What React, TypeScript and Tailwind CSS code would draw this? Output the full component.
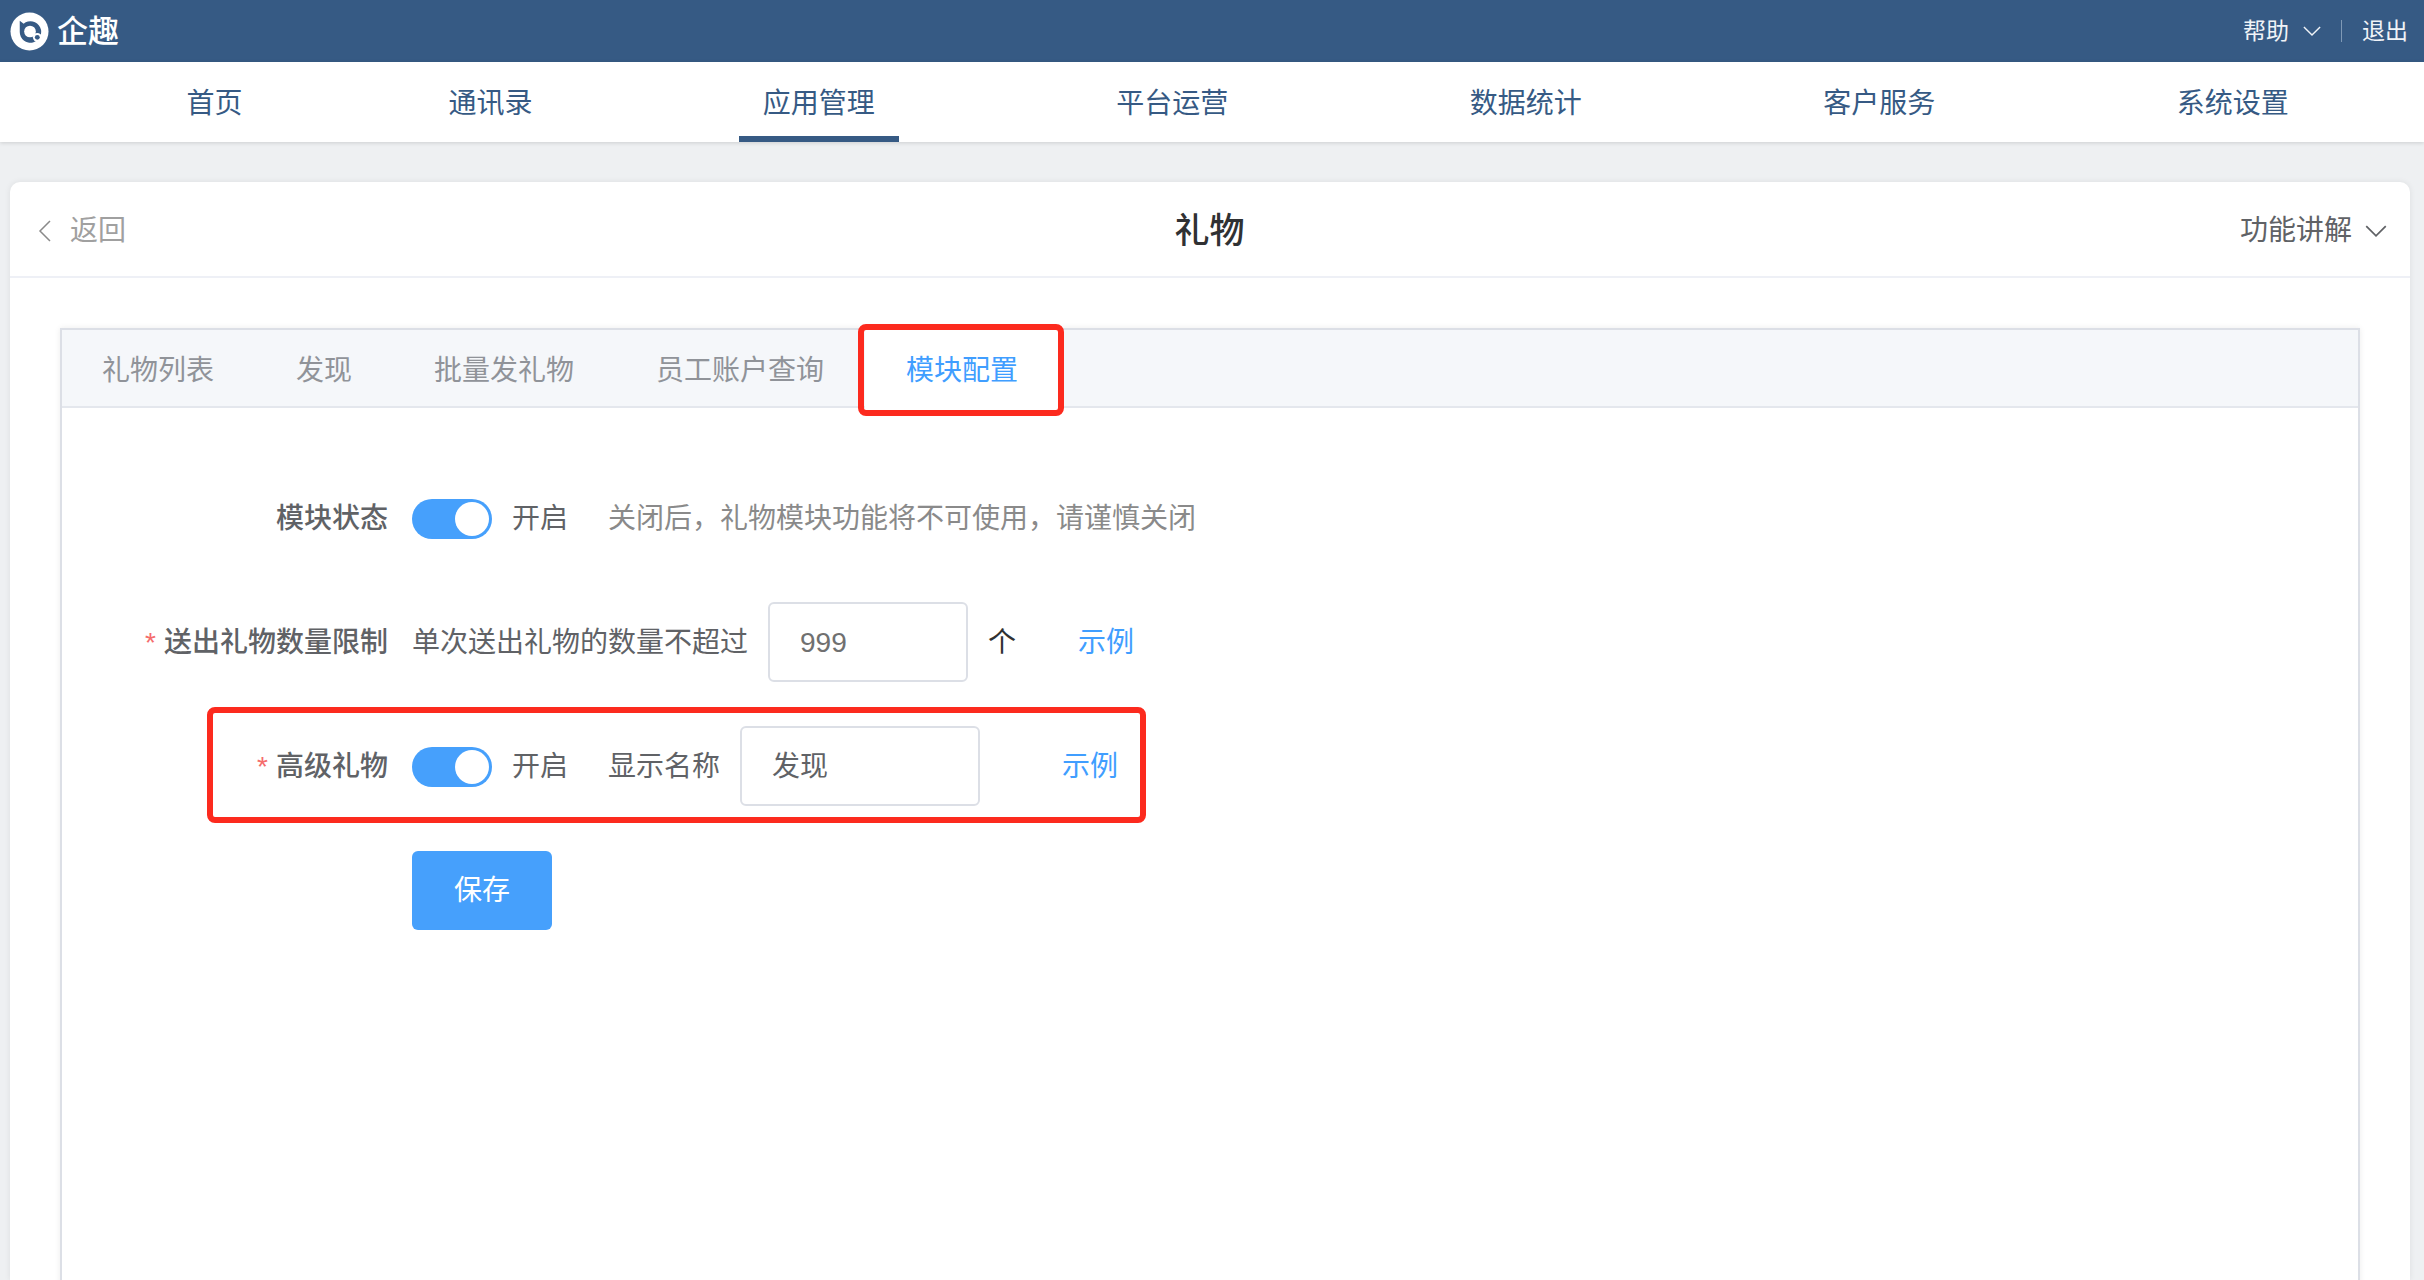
import React from "react";

const FONT = "font-['Liberation_Sans','Noto_Sans_CJK_SC',sans-serif]";

const navItems = [
  { label: "首页", width: "w-[249px]" },
  { label: "通讯录", width: "w-[303px]" },
  { label: "应用管理", width: "w-[353.5px]", active: true },
  { label: "平台运营", width: "w-[353.5px]" },
  { label: "数据统计", width: "w-[353.5px]" },
  { label: "客户服务", width: "w-[353.5px]" },
  { label: "系统设置", width: "w-[353.5px]" },
];

const tabs = ["礼物列表", "发现", "批量发礼物", "员工账户查询", "模块配置"];

const Chevron = ({ className }: { className: string }) => (
  <svg viewBox="0 0 20 12" fill="none" className={className}>
    <path d="M1 1l9 9 9-9" stroke="currentColor" strokeWidth="1.6" />
  </svg>
);

const Toggle = () => (
  <div className="flex h-[40px] w-[80px] shrink-0 items-center justify-end rounded-full bg-[#46a0fc] pr-[3px]">
    <div className="h-[34px] w-[34px] rounded-full bg-white" />
  </div>
);

const Label = ({ text, required }: { text: string; required?: boolean }) => (
  <div className="mr-[24px] w-[326px] shrink-0 text-right font-medium text-[#606266]">
    {required && <span className="mr-[8px] text-[#f56c6c]">*</span>}
    {text}
  </div>
);

export default function App() {
  return (
    <div className={`h-[1280px] overflow-hidden bg-[#eef0f2] ${FONT}`}>
      <div className="flex h-[62px] items-center justify-between bg-[#365a84] pl-[10px] pr-[16px] text-white">
        <div className="flex items-center gap-[8px]">
          <svg viewBox="0 0 40 40" className="h-[39px] w-[39px]">
            <circle cx="20" cy="20" r="19.5" fill="#fff" />
            <path d="M10 9l4 3a11 11 0 1 1-4 8.500z" fill="#365a84" />
            <circle cx="20.500" cy="20" r="6" fill="#fff" />
            <circle cx="28" cy="26" r="4.500" fill="#fff" />
            <circle cx="28" cy="26" r="2.500" fill="#365a84" />
          </svg>
          <span className="text-[31px] font-medium leading-none">企趣</span>
        </div>
        <div className="flex items-center text-[23px] text-[#f0f3f7]">
          <span>帮助</span>
          <Chevron className="ml-[14px] h-[11px] w-[18px]" />
          <span className="ml-[20px] mr-[20px] h-[22px] w-[1px] bg-[#7f99b6]" />
          <span>退出</span>
        </div>
      </div>

      <nav className="relative flex h-[80px] bg-white pl-[90px] shadow-[0_1px_4px_rgba(0,0,0,0.14)]">
        {navItems.map((item) => (
          <div key={item.label} className={`flex justify-center ${item.width}`}>
            <div
              className={`flex h-full items-center border-b-[6px] px-[24px] pt-[9px] text-[28px] text-[#365a84] ${
                item.active ? "border-[#365a84]" : "border-transparent"
              }`}
            >
              {item.label}
            </div>
          </div>
        ))}
      </nav>

      <main className="ml-[10px] mr-[14px] mt-[40px] h-[1098px] rounded-t-[10px] bg-white shadow-[0_0_6px_rgba(0,0,0,0.08)]">
        <header className="grid h-[96px] grid-cols-3 items-center border-b-2 border-[#eef0f6] pl-[28px] pr-[23px] pt-[4px] text-[28px]">
          <div className="flex items-center gap-[18px] text-[#a0a0a0]">
            <svg viewBox="0 0 14 22" fill="none" className="h-[22px] w-[14px] text-[#8a8a8a]">
              <path d="M12 1L2 11l10 10" stroke="currentColor" strokeWidth="1.5" />
            </svg>
            <span>返回</span>
          </div>
          <div className="pr-[6px] text-center text-[35px] font-medium text-[#303133]">礼物</div>
          <div className="flex items-center justify-end gap-[13px] text-[#606266]">
            <span>功能讲解</span>
            <Chevron className="h-[13px] w-[22px]" />
          </div>
        </header>

        <section className="relative ml-[50px] mr-[50px] mt-[50px] h-[960px] border-2 border-[#dcdfe6] text-[28px] shadow-[0_0_6px_rgba(0,0,0,0.08)]">
          <div className="flex h-[78px] border-b-2 border-[#e4e7ed] bg-[#f5f7fa] text-[#909399]">
            {tabs.map((tab, i) => (
              <div
                key={tab}
                className={`-mb-[2px] flex h-[78px] items-center pt-[4px] ${
                  i === 0 ? "pl-[40px] pr-[41px]" : "px-[41px]"
                } ${i === 4 ? "bg-white text-[#409eff]" : ""}`}
              >
                {tab}
              </div>
            ))}
          </div>

          <div className="absolute left-[796px] top-[-6px] h-[92px] w-[206px] rounded-[8px] border-[6px] border-[#fc2a1e]" />

          <div className="leading-none">
            <div className="mt-[71px] flex h-[80px] items-center">
              <Label text="模块状态" />
              <Toggle />
              <span className="ml-[20px] text-[#606266]">开启</span>
              <span className="ml-[40px] text-[#8a8a8a]">关闭后，礼物模块功能将不可使用，请谨慎关闭</span>
            </div>

            <div className="mt-[44px] flex h-[80px] items-center">
              <Label text="送出礼物数量限制" required />
              <span className="text-[#606266]">单次送出礼物的数量不超过</span>
              <div className="-mt-[3px] ml-[20px] flex h-[80px] w-[200px] items-center rounded-[6px] border-2 border-[#dcdfe6] px-[30px] pt-[3px] text-[#707070]">
                999
              </div>
              <span className="ml-[20px] text-[#303133]">个</span>
              <span className="ml-[62px] text-[#409eff]">示例</span>
            </div>

            <div className="mt-[44px] flex h-[80px] items-center">
              <Label text="高级礼物" required />
              <Toggle />
              <span className="ml-[20px] text-[#606266]">开启</span>
              <span className="ml-[40px] text-[#606266]">显示名称</span>
              <div className="-mt-[3px] ml-[20px] flex h-[80px] w-[240px] items-center rounded-[6px] border-2 border-[#dcdfe6] px-[30px] pt-[3px] text-[#606266]">
                发现
              </div>
              <span className="ml-[82px] text-[#409eff]">示例</span>
            </div>

            <button className="ml-[350px] mt-[44px] flex h-[79px] w-[140px] items-center justify-center rounded-[6px] bg-[#46a0fc] text-white">
              保存
            </button>
          </div>

          <div className="absolute left-[145px] top-[377px] h-[116px] w-[939px] rounded-[8px] border-[6px] border-[#fc2a1e]" />
        </section>
      </main>
    </div>
  );
}
